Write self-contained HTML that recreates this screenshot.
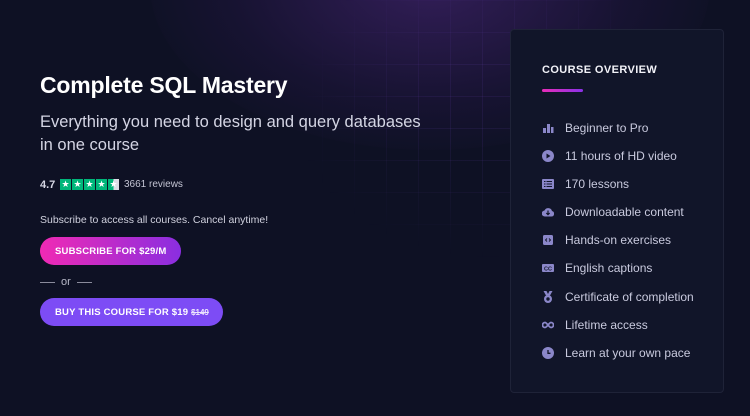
<!DOCTYPE html>
<html><head><meta charset="utf-8"><style>
*{margin:0;padding:0;box-sizing:border-box}
body{width:750px;height:416px;overflow:hidden;background:#0e1124;font-family:"Liberation Sans",sans-serif;position:relative;color:#fff}
.glow{position:absolute;left:150px;top:-180px;width:560px;height:330px;border-radius:50%;background:radial-gradient(ellipse at center,rgba(80,40,130,.55),rgba(50,25,90,.25) 50%,rgba(14,17,36,0) 75%)}
.grid{position:absolute;left:290px;top:0;width:330px;height:260px;background-image:linear-gradient(rgba(110,70,190,.12) 1px,transparent 1px),linear-gradient(90deg,rgba(110,70,190,.12) 1px,transparent 1px);background-size:32px 32px;-webkit-mask-image:radial-gradient(ellipse at 60% 40%,#000 20%,transparent 70%)}
.abs{position:absolute;white-space:nowrap}
h1{position:absolute;left:40px;top:72px;font-size:23px;font-weight:bold;letter-spacing:-.2px}
.sub{left:40px;top:111px;font-size:16.5px;line-height:23px;color:#d4d5e4;white-space:normal;width:390px}
.btn{position:absolute;left:40px;height:28px;border-radius:14px;font-size:9.5px;font-weight:bold;letter-spacing:.2px;color:#fff;display:flex;align-items:center;padding-left:15px;white-space:nowrap}
.card{position:absolute;left:510px;top:29px;width:214px;height:364px;background:#111529;border:1px solid #1f2338;border-radius:4px}
.item{position:absolute;left:31px;font-size:12px;color:#c9cade;display:flex;align-items:center}
.item svg{width:12px;height:12px;margin-right:11px;fill:#8b87c9}
</style></head><body>
<div class="glow"></div><div class="grid"></div>
<h1>Complete SQL Mastery</h1>
<div class="abs sub">Everything you need to design and query databases in one course</div>
<div class="abs" style="left:40px;top:179px;font-size:11px;font-weight:bold;color:#d6d7e4">4.7</div>
<div class="abs" style="left:60px;top:179px;display:flex;gap:1px">
<span style="width:11px;height:11px;background:#00b67a;color:#fff;font-size:9px;line-height:11px;text-align:center">★</span><span style="width:11px;height:11px;background:#00b67a;color:#fff;font-size:9px;line-height:11px;text-align:center">★</span><span style="width:11px;height:11px;background:#00b67a;color:#fff;font-size:9px;line-height:11px;text-align:center">★</span><span style="width:11px;height:11px;background:#00b67a;color:#fff;font-size:9px;line-height:11px;text-align:center">★</span><span style="width:11px;height:11px;background:linear-gradient(90deg,#00b67a 50%,#dcdce6 50%);color:#fff;font-size:9px;line-height:11px;text-align:center">★</span></div>
<div class="abs" style="left:124px;top:179px;font-size:10px;color:#c4c5d4">3661 reviews</div>
<div class="abs" style="left:40px;top:214px;font-size:10.5px;color:#d0d1de">Subscribe to access all courses. Cancel anytime!</div>
<div class="btn" style="top:237px;width:141px;background:linear-gradient(90deg,#f02ab4,#8a2ee0)">SUBSCRIBE FOR $29/M</div>
<div class="abs" style="left:40px;top:276px;font-size:11px;color:#b8b9c8;display:flex;align-items:center"><span style="width:15px;height:1px;background:#8a8b9c;margin-right:6px"></span>or<span style="width:15px;height:1px;background:#8a8b9c;margin-left:6px"></span></div>
<div class="btn" style="top:298px;width:183px;background:#7d4cf5">BUY THIS COURSE FOR $19&nbsp;<s style="font-size:8px;opacity:.85;letter-spacing:0">$149</s></div>
<div class="card">
<div class="abs" style="left:31px;top:34px;font-size:11px;font-weight:bold;letter-spacing:.4px;color:#f2f2f8">COURSE OVERVIEW</div>
<div class="abs" style="left:31px;top:59px;width:41px;height:3px;border-radius:2px;background:linear-gradient(90deg,#e92cb8,#8a32e8)"></div>
<div class="item" style="top:91px"><svg viewBox="0 0 12 12"><rect x="1" y="6" width="3" height="5"/><rect x="5" y="2" width="3" height="9"/><rect x="9" y="5" width="2.5" height="6"/></svg>Beginner to Pro</div>
<div class="item" style="top:119px"><svg viewBox="0 0 12 12"><circle cx="6" cy="6" r="6"/><path d="M4.5 3.5 8.5 6 4.5 8.5z" fill="#111529"/></svg>11 hours of HD video</div>
<div class="item" style="top:147px"><svg viewBox="0 0 12 12"><rect x="0" y="1" width="12" height="10" rx="1"/><path d="M2 3.5h1.5M4.5 3.5h5.5M2 6h1.5M4.5 6h5.5M2 8.5h1.5M4.5 8.5h5.5" stroke="#111529" stroke-width="1"/></svg>170 lessons</div>
<div class="item" style="top:175px"><svg viewBox="0 0 12 12"><path d="M3 10.5a3 3 0 0 1-.5-6A4 4 0 0 1 10 5a2.8 2.8 0 0 1-.5 5.5z"/><path d="M6 4.5v4M4.3 7 6 8.7 7.7 7" stroke="#111529" stroke-width="1.2" fill="none"/></svg>Downloadable content</div>
<div class="item" style="top:203px"><svg viewBox="0 0 12 12"><rect x="1" y="1" width="10" height="10" rx="1.5"/><path d="M5 4.5 3.5 6 5 7.5M7 4.5 8.5 6 7 7.5" stroke="#111529" stroke-width=".9" fill="none"/></svg>Hands-on exercises</div>
<div class="item" style="top:231px"><svg viewBox="0 0 12 12"><rect x="0" y="2" width="12" height="8" rx="1"/><text x="6" y="8.3" font-size="5.5" font-weight="bold" text-anchor="middle" fill="#111529" font-family="Liberation Sans">CC</text></svg>English captions</div>
<div class="item" style="top:260px"><svg viewBox="0 0 12 12"><path d="M1.5 0h3l1.5 3 1.5-3h3L8 4.5 6 4 4 4.5z"/><circle cx="6" cy="8" r="4"/><circle cx="6" cy="8" r="1.7" fill="#111529"/></svg>Certificate of completion</div>
<div class="item" style="top:288px"><svg viewBox="0 0 12 12"><path d="M3 3.5a2.5 2.5 0 1 0 0 5c2 0 4-5 6-5a2.5 2.5 0 1 1 0 5c-2 0-4-5-6-5z" fill="none" stroke="#8b87c9" stroke-width="1.8"/></svg>Lifetime access</div>
<div class="item" style="top:316px"><svg viewBox="0 0 12 12"><circle cx="6" cy="6" r="6"/><path d="M6 3v3.3h2.5" stroke="#111529" stroke-width="1.3" fill="none"/></svg>Learn at your own pace</div>
</div>
</body></html>
